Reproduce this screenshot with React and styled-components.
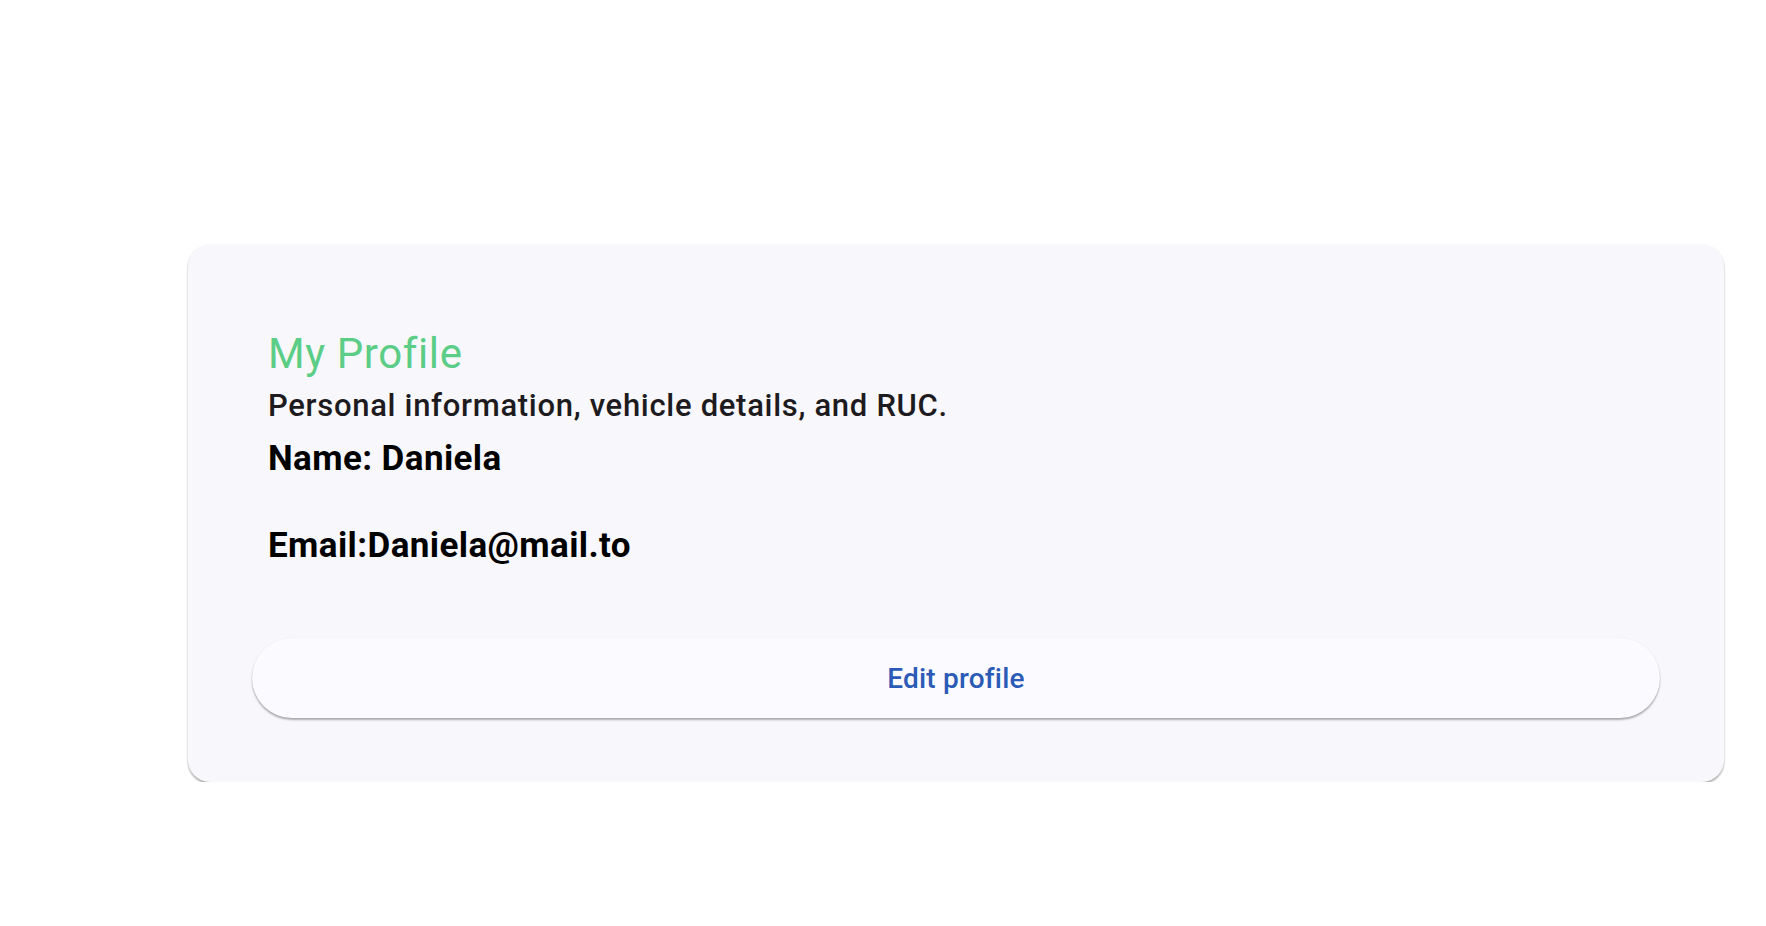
import React from "react";
import styled, { createGlobalStyle } from "styled-components";

const GlobalStyle = createGlobalStyle`
  body {
    margin: 0;
    background: #ffffff;
    font-family: Roboto, "Liberation Sans", sans-serif;
  }
`;

const Page = styled.main`
  display: flex;
  padding: 245px 0 0 188px;
`;

const Card = styled.section`
  width: 1536px;
  box-sizing: border-box;
  padding: 84px 64px 64px;
  background: #f8f7fc;
  border-radius: 22px;
  box-shadow: 0 2px 2px rgba(0, 0, 0, 0.3), 0 0 3px rgba(0, 0, 0, 0.06);
`;

const Info = styled.div`
  display: flex;
  flex-direction: column;
  padding-left: 16px;
`;

const Title = styled.h1`
  margin: 0;
  font-size: 42px;
  line-height: 50px;
  font-weight: 400;
  letter-spacing: 0.6px;
  color: #5ccd86;
`;

const Subtitle = styled.p`
  margin: 9px 0 0;
  font-size: 31px;
  line-height: 36px;
  font-weight: 500;
  letter-spacing: 0.7px;
  color: #1d1b20;
`;

const Field = styled.p`
  margin: ${(p) => p.$gap}px 0 0;
  font-size: 35px;
  line-height: 40px;
  font-weight: 700;
  letter-spacing: 0.4px;
  color: #000000;
`;

const EditButton = styled.button`
  display: flex;
  align-items: center;
  justify-content: center;
  width: 100%;
  height: 80px;
  margin-top: 72px;
  border: none;
  border-radius: 40px;
  background: #fbfaff;
  box-shadow: 0 2px 2px rgba(0, 0, 0, 0.3), 0 0 2px rgba(0, 0, 0, 0.05);
  font-family: Roboto, "Liberation Sans", sans-serif;
  font-size: 28px;
  font-weight: 500;
  letter-spacing: 0.2px;
  color: #2b5bb6;
  cursor: pointer;
`;

export default function App() {
  return (
    <>
      <GlobalStyle />
      <Page>
        <Card>
          <Info>
            <Title>My Profile</Title>
            <Subtitle>Personal information, vehicle details, and RUC.</Subtitle>
            <Field $gap={15}>Name: Daniela</Field>
            <Field $gap={47}>Email:Daniela@mail.to</Field>
          </Info>
          <EditButton>Edit profile</EditButton>
        </Card>
      </Page>
    </>
  );
}
